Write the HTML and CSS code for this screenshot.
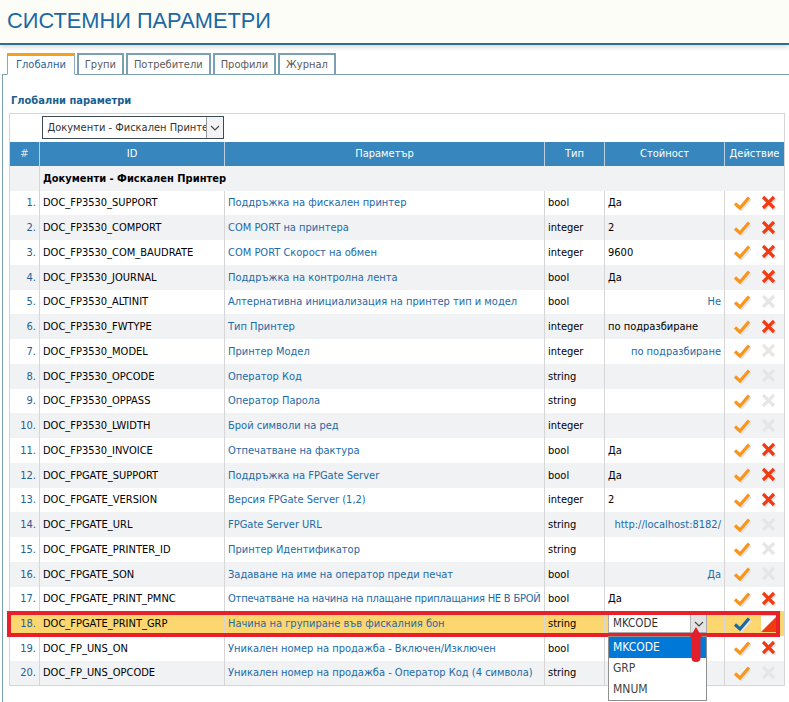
FILE: index.html
```html
<!DOCTYPE html>
<html lang="bg">
<head>
<meta charset="utf-8">
<title>Системни параметри</title>
<link rel="stylesheet" href="styles.css">
</head>
<body>
<svg class="defs" width="0" height="0" aria-hidden="true">
  <symbol id="i-ok" viewBox="0 0 18 16">
    <polyline points="3.5,10 8.5,14.5 17.5,4" fill="none" stroke="#e4e4e4" stroke-width="3.2"/>
    <polyline points="2,8.5 7,13 16,2.5" fill="none" stroke="currentColor" stroke-width="3.2"/>
  </symbol>
  <symbol id="i-del" viewBox="0 0 16 16">
    <path d="M3.5 3.5 L14.5 14.5 M14.5 3.5 L3.5 14.5" fill="none" stroke="#e4e4e4" stroke-width="3.2"/>
    <path d="M2 2 L13 13 M13 2 L2 13" fill="none" stroke="currentColor" stroke-width="3.2"/>
  </symbol>
  <symbol id="i-off" viewBox="0 0 16 16">
    <path d="M2 2 L13 13 M13 2 L2 13" fill="none" stroke="currentColor" stroke-width="3.2"/>
  </symbol>
  <symbol id="i-chev" viewBox="0 0 10 6">
    <polyline points="1,1 5,5 9,1" fill="none" stroke="currentColor" stroke-width="1.1"/>
  </symbol>
</svg>

<header class="header"><h1 class="title">СИСТЕМНИ ПАРАМЕТРИ</h1></header>

<nav class="tabs">
  <a class="tab active">Глобални</a>
  <a class="tab">Групи</a>
  <a class="tab">Потребители</a>
  <a class="tab">Профили</a>
  <a class="tab">Журнал</a>
</nav>

<section class="panel">
  <h2 class="panel-title">Глобални параметри</h2>
  <div class="grid-wrap">
    <table class="grid">
      <colgroup>
        <col class="c-num"><col class="c-id"><col class="c-par"><col class="c-typ"><col class="c-val"><col class="c-act">
      </colgroup>
      <thead>
        <tr class="filter-row">
          <td></td>
          <td><div class="combo combo-filter"><span class="combo-text">Документи - Фискален Принтер</span><span class="combo-btn"><svg class="chev"><use href="#i-chev"/></svg></span></div></td>
          <td colspan="4"></td>
        </tr>
        <tr class="head-row">
          <th>#</th><th>ID</th><th>Параметър</th><th>Тип</th><th>Стойност</th><th>Действие</th>
        </tr>
      </thead>
      <tbody>
        <tr class="group-row"><td></td><td colspan="5">Документи - Фискален Принтер</td></tr>
      </tbody>
      <tbody class="rows">
        <tr><td class="num">1.</td><td>DOC_FP3530_SUPPORT</td><td class="par">Поддръжка на фискален принтер</td><td>bool</td><td>Да</td><td class="act"><svg class="ico ok"><use href="#i-ok"/></svg><svg class="ico del"><use href="#i-del"/></svg></td></tr>
        <tr><td class="num">2.</td><td>DOC_FP3530_COMPORT</td><td class="par">COM PORT на принтера</td><td>integer</td><td>2</td><td class="act"><svg class="ico ok"><use href="#i-ok"/></svg><svg class="ico del"><use href="#i-del"/></svg></td></tr>
        <tr><td class="num">3.</td><td>DOC_FP3530_COM_BAUDRATE</td><td class="par">COM PORT Скорост на обмен</td><td>integer</td><td>9600</td><td class="act"><svg class="ico ok"><use href="#i-ok"/></svg><svg class="ico del"><use href="#i-del"/></svg></td></tr>
        <tr><td class="num">4.</td><td>DOC_FP3530_JOURNAL</td><td class="par">Поддръжка на контролна лента</td><td>bool</td><td>Да</td><td class="act"><svg class="ico ok"><use href="#i-ok"/></svg><svg class="ico del"><use href="#i-del"/></svg></td></tr>
        <tr><td class="num">5.</td><td>DOC_FP3530_ALTINIT</td><td class="par">Алтернативна инициализация на принтер тип и модел</td><td>bool</td><td class="def">Не</td><td class="act"><svg class="ico ok"><use href="#i-ok"/></svg><svg class="ico off"><use href="#i-off"/></svg></td></tr>
        <tr><td class="num">6.</td><td>DOC_FP3530_FWTYPE</td><td class="par">Тип Принтер</td><td>integer</td><td>по подразбиране</td><td class="act"><svg class="ico ok"><use href="#i-ok"/></svg><svg class="ico del"><use href="#i-del"/></svg></td></tr>
        <tr><td class="num">7.</td><td>DOC_FP3530_MODEL</td><td class="par">Принтер Модел</td><td>integer</td><td class="def">по подразбиране</td><td class="act"><svg class="ico ok"><use href="#i-ok"/></svg><svg class="ico off"><use href="#i-off"/></svg></td></tr>
        <tr><td class="num">8.</td><td>DOC_FP3530_OPCODE</td><td class="par">Оператор Код</td><td>string</td><td></td><td class="act"><svg class="ico ok"><use href="#i-ok"/></svg><svg class="ico off"><use href="#i-off"/></svg></td></tr>
        <tr><td class="num">9.</td><td>DOC_FP3530_OPPASS</td><td class="par">Оператор Парола</td><td>string</td><td></td><td class="act"><svg class="ico ok"><use href="#i-ok"/></svg><svg class="ico off"><use href="#i-off"/></svg></td></tr>
        <tr><td class="num">10.</td><td>DOC_FP3530_LWIDTH</td><td class="par">Брой символи на ред</td><td>integer</td><td></td><td class="act"><svg class="ico ok"><use href="#i-ok"/></svg><svg class="ico off"><use href="#i-off"/></svg></td></tr>
        <tr><td class="num">11.</td><td>DOC_FP3530_INVOICE</td><td class="par">Отпечатване на фактура</td><td>bool</td><td>Да</td><td class="act"><svg class="ico ok"><use href="#i-ok"/></svg><svg class="ico del"><use href="#i-del"/></svg></td></tr>
        <tr><td class="num">12.</td><td>DOC_FPGATE_SUPPORT</td><td class="par">Поддръжка на FPGate Server</td><td>bool</td><td>Да</td><td class="act"><svg class="ico ok"><use href="#i-ok"/></svg><svg class="ico del"><use href="#i-del"/></svg></td></tr>
        <tr><td class="num">13.</td><td>DOC_FPGATE_VERSION</td><td class="par">Версия FPGate Server (1,2)</td><td>integer</td><td>2</td><td class="act"><svg class="ico ok"><use href="#i-ok"/></svg><svg class="ico del"><use href="#i-del"/></svg></td></tr>
        <tr><td class="num">14.</td><td>DOC_FPGATE_URL</td><td class="par">FPGate Server URL</td><td>string</td><td class="def">http://localhost:8182/</td><td class="act"><svg class="ico ok"><use href="#i-ok"/></svg><svg class="ico off"><use href="#i-off"/></svg></td></tr>
        <tr><td class="num">15.</td><td>DOC_FPGATE_PRINTER_ID</td><td class="par">Принтер Идентификатор</td><td>string</td><td></td><td class="act"><svg class="ico ok"><use href="#i-ok"/></svg><svg class="ico off"><use href="#i-off"/></svg></td></tr>
        <tr><td class="num">16.</td><td>DOC_FPGATE_SON</td><td class="par">Задаване на име на оператор преди печат</td><td>bool</td><td class="def">Да</td><td class="act"><svg class="ico ok"><use href="#i-ok"/></svg><svg class="ico off"><use href="#i-off"/></svg></td></tr>
        <tr><td class="num">17.</td><td>DOC_FPGATE_PRINT_PMNC</td><td class="par tight">Отпечатване на начина на плащане приплащания НЕ В БРОЙ</td><td>bool</td><td>Да</td><td class="act"><svg class="ico ok"><use href="#i-ok"/></svg><svg class="ico del"><use href="#i-del"/></svg></td></tr>
        <tr class="hl"><td class="num">18.</td><td>DOC_FPGATE_PRINT_GRP</td><td class="par">Начина на групиране във фискалния бон</td><td>string</td>
          <td class="sel">
            <div class="combo combo-edit">
              <span class="combo-text">MKCODE</span><span class="combo-btn"><svg class="chev"><use href="#i-chev"/></svg></span>
              <ul class="dropdown">
                <li class="cur">MKCODE</li>
                <li>GRP</li>
                <li>MNUM</li>
              </ul>
              <svg class="pointer" viewBox="0 0 14 35"><path d="M7 0 L13.5 11 L11.5 11 L11.5 31 Q11.5 35 7 35 Q2.5 35 2.5 31 L2.5 11 L0.5 11 Z" fill="#e41e2b"/></svg>
            </div>
          </td>
          <td class="act"><svg class="ico save"><use href="#i-ok"/></svg><svg class="ico cancel" viewBox="0 0 16 16"><rect x="0" y="0" width="16" height="16" fill="#fff"/><polygon points="16,0 16,16 0,16" fill="#f23a10"/></svg></td></tr>
        <tr><td class="num">19.</td><td>DOC_FP_UNS_ON</td><td class="par">Уникален номер на продажба - Включен/Изключен</td><td>bool</td><td></td><td class="act"><svg class="ico ok"><use href="#i-ok"/></svg><svg class="ico del"><use href="#i-del"/></svg></td></tr>
        <tr><td class="num">20.</td><td>DOC_FP_UNS_OPCODE</td><td class="par">Уникален номер на продажба - Оператор Код (4 символа)</td><td>string</td><td></td><td class="act"><svg class="ico ok"><use href="#i-ok"/></svg><svg class="ico off"><use href="#i-off"/></svg></td></tr>
      </tbody>
    </table>
    <div class="annot-frame"></div>
  </div>
</section>
</body>
</html>
```

FILE: styles.css
```css
* { box-sizing: border-box; }

html, body {
  margin: 0;
  background: #fff;
}

body {
  font-family: "DejaVu Sans Condensed", "DejaVu Sans", sans-serif;
  font-stretch: condensed;
  font-size: 11px;
  color: #000;
  overflow: hidden;
}

.defs {
  position: absolute;
  width: 0;
  height: 0;
  overflow: hidden;
}

/* ---------- header ---------- */
.header {
  height: 45px;
  background: #fcfdf7;
  border-bottom: 2px solid #2a6e99;
  box-shadow: 0 2px 5px rgba(0, 0, 0, 0.16);
  position: relative;
  z-index: 2;
}

.title {
  margin: 0;
  padding: 9px 0 0 7px;
  font-family: "Liberation Sans", Arial, sans-serif;
  font-weight: normal;
  font-size: 21.8px;
  line-height: 24px;
  color: #1c68a4;
}

/* ---------- tabs ---------- */
.tabs {
  display: flex;
  gap: 2px;
  margin: 8px 0 -1px 7px;
  height: 22px;
  position: relative;
  z-index: 1;
}

.tab {
  display: block;
  height: 22px;
  padding: 0 6px;
  border: 2px solid #7aa0b2;
  border-bottom: 1px solid #7aa0b2;
  background: #fff;
  color: #5a5a5a;
  font-size: 11px;
  line-height: 19px;
}

.tab.active {
  border-top: 3px solid #f7a11a;
  border-left: 1px solid #8aa9b8;
  border-right: 1px solid #8aa9b8;
  border-bottom: 1px solid #fff;
  color: #28639a;
  padding: 0 8px;
  line-height: 18px;
}

/* ---------- panel ---------- */
.panel {
  margin-left: 2px;
  border-left: 1px solid #7aa0b2;
  border-top: 1px solid #7aa0b2;
  padding: 0 0 0 6px;
  min-height: 640px;
}

.panel-title {
  margin: 0;
  padding-top: 19px;
  font-size: 11px;
  line-height: 14px;
  font-weight: bold;
  color: #1b5e8e;
  padding-left: 2px;
}

.grid-wrap {
  position: relative;
  margin-top: 5px;
  width: 775px;
}

/* ---------- table ---------- */
.grid {
  border-collapse: collapse;
  table-layout: fixed;
  width: 775px;
  border: 1px solid #d6d6d6;
}

.c-num { width: 30px; }
.c-id  { width: 185px; }
.c-par { width: 320px; }
.c-typ { width: 60px; }
.c-val { width: 120px; }
.c-act { width: 60px; }

.grid td {
  height: 24.75px;
  padding: 0 3px;
  white-space: nowrap;
  overflow: hidden;
  border-left: 1px solid #d6d6d6;
  vertical-align: middle;
}

.filter-row td {
  height: 28px;
  padding: 0 2px;
  border-left: none;
  background: #fff;
}

.head-row th {
  height: 24px;
  background: #3787be;
  color: #fff;
  font-weight: normal;
  font-size: 11px;
  text-align: center;
  border-left: 1px solid #b9d0e1;
  padding: 0;
}

.head-row th:first-child { color: #d5e3ee; border-left: none; }

.group-row td {
  background: #f1f2f4;
  font-weight: bold;
  height: 25px;
}

.rows tr:nth-child(even) td { background: #f1f2f4; }

.num {
  text-align: right;
  color: #1f5f95;
}

.par { color: #1c6aa8; }
.par.tight { letter-spacing: -0.2px; }

.def {
  text-align: right;
  color: #1c6aa8;
}

/* ---------- action icons ---------- */
.grid td.act { padding: 0 0 0 8px; }

.ico {
  display: inline-block;
  vertical-align: middle;
}

.ico.ok, .ico.save { width: 18px; height: 16px; color: #f8961c; margin-right: 10px; }
.ico.save { color: #1c6aa0; }
.ico.del, .ico.off, .ico.cancel { width: 16px; height: 16px; color: #f13b12; }
.ico.off { color: #e6e6e6; }

/* ---------- combos ---------- */
.combo {
  display: flex;
  align-items: stretch;
  background: #fff;
  position: relative;
}

.combo-text {
  flex: 1;
  overflow: hidden;
  white-space: nowrap;
  color: #333;
}

.combo-btn {
  display: flex;
  align-items: center;
  justify-content: center;
  color: #444;
}

.chev { width: 10px; height: 6px; }

.combo-filter {
  width: 182px;
  height: 23px;
  border: 1px solid #3d4b58;
  font-size: 11px;
  line-height: 21px;
}

.combo-filter .combo-text { padding-left: 5px; }

.combo-filter .combo-btn {
  width: 17px;
  border-left: 1px solid #9a9a9a;
  background: #f3f3f3;
}

.combo-edit {
  width: 99px;
  height: 19px;
  border: 1px solid #a9a9a9;
  font-size: 11.5px;
  line-height: 17px;
}

.combo-edit .combo-text { padding-left: 4px; }

.combo-edit .combo-btn {
  width: 16px;
  background: #e3e3e3;
  border-left: 1px solid #b5b5b5;
}

/* ---------- highlighted row ---------- */
.rows tr.hl td { background: #fcd66e; }
.grid td.sel { overflow: visible; }

.dropdown {
  position: absolute;
  left: -1px;
  top: 21px;
  width: 99px;
  margin: 0;
  padding: 0;
  list-style: none;
  background: #fff;
  border: 1px solid #8f8f8f;
  z-index: 5;
  font-size: 12px;
}

.dropdown li {
  height: 21px;
  line-height: 21px;
  padding-left: 4px;
  color: #444;
}

.dropdown li.cur {
  background: #0078d7;
  color: #fff;
}

.pointer {
  position: absolute;
  left: 80px;
  top: 12px;
  width: 14px;
  height: 35px;
  z-index: 6;
}

.annot-frame {
  position: absolute;
  left: -2px;
  top: 498px;
  width: 773px;
  height: 26px;
  border: 4px solid #e8202a;
  z-index: 4;
  pointer-events: none;
}
```
